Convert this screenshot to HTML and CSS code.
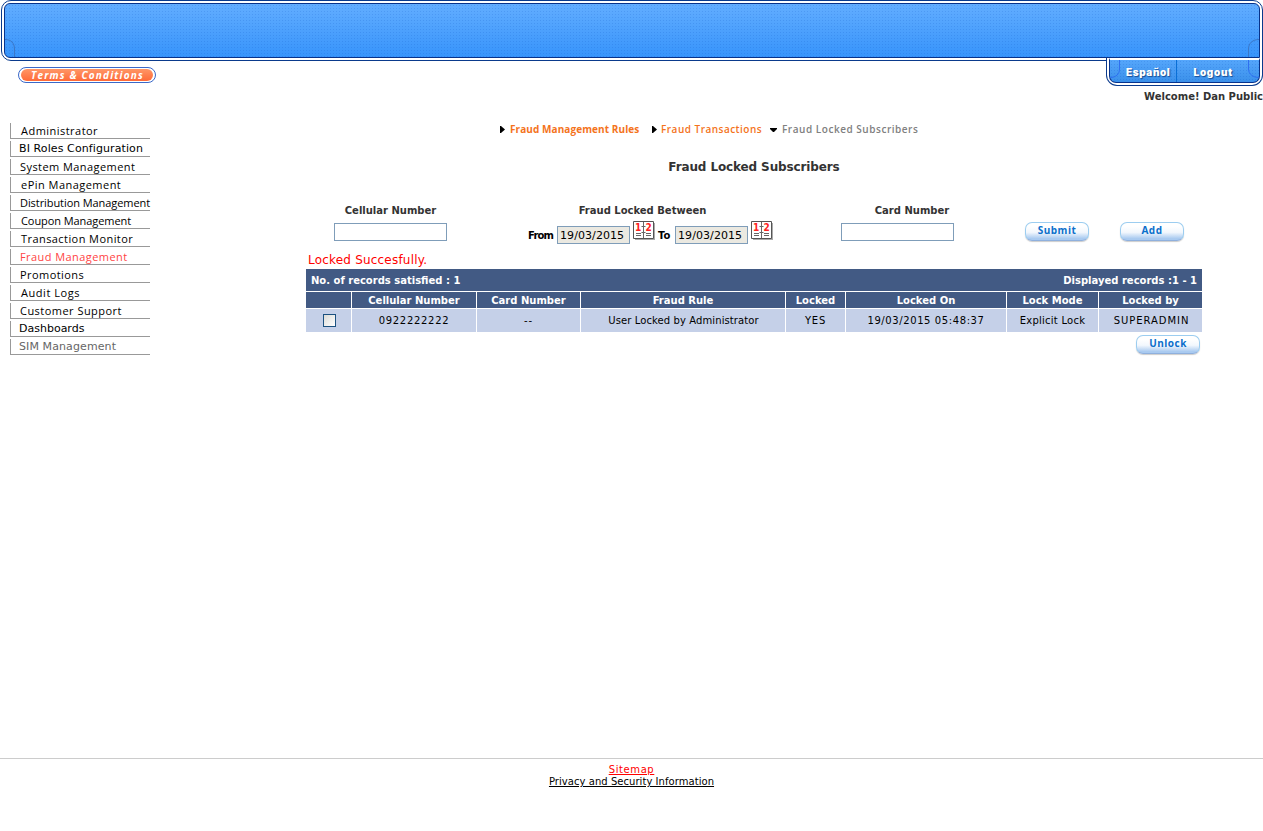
FILE: index.html
```html
<!DOCTYPE html>
<html lang="en">
<head>
<meta charset="utf-8">
<title>Fraud Locked Subscribers</title>
<link rel="stylesheet" href="styles.css">
</head>
<body>
<header class="banner">
  <div class="banner-fill">
    <svg class="corner" width="11" height="18" viewBox="0 0 11 18"><path d="M0 .5C6 .5 9.500 4 9.500 10V18" fill="none" stroke="#3b78c8"/></svg>
    <svg class="corner" width="11" height="18" viewBox="0 0 11 18"><path d="M11 .5C5 .5 .5 4 .5 10V18" fill="none" stroke="#3b78c8"/></svg>
  </div>
</header>
<div class="subbar">
  <a class="terms"><span>Terms &amp; Conditions</span></a>
  <div class="account">
    <nav class="tab">
      <div class="tab-fill">
        <svg width="11" height="23" viewBox="0 0 11 23"><path d="M9.500 0V9C9.500 14 6 17.500 0 17.500" fill="none" stroke="#2f6ff0"/></svg>
        <a class="tab-link es">Español</a>
        <a class="tab-link out">Logout</a>
        <svg width="11" height="23" viewBox="0 0 11 23"><path d="M.5 0V9C.5 14 5 17.500 11 17.500" fill="none" stroke="#2f6ff0"/></svg>
      </div>
    </nav>
    <div class="welcome">Welcome! Dan Public</div>
  </div>
</div>
<div class="page">
  <nav class="menu">
    <a class="ls45">Administrator</a>
    <a class="wide ls-bi">BI Roles Configuration</a>
    <a class="ls4 near">System Management</a>
    <a class="ls45">ePin Management</a>
    <a class="ls-tight near">Distribution Management</a>
    <a class="ls-tight">Coupon Management</a>
    <a class="ls4">Transaction Monitor</a>
    <a class="ls4 near current">Fraud Management</a>
    <a class="ls4 near">Promotions</a>
    <a class="ls5">Audit Logs</a>
    <a class="ls45 near">Customer Support</a>
    <a class="wide dash">Dashboards</a>
    <a class="wide sim">SIM Management</a>
  </nav>
  <main class="main">
    <nav class="crumbs">
      <svg width="5" height="7" viewBox="0 0 5 7"><path d="M0 0H1L5 3.500L1 7H0Z"/></svg><a class="crumb rules">Fraud Management Rules</a>
      <svg width="5" height="7" viewBox="0 0 5 7"><path d="M0 0H1L5 3.500L1 7H0Z"/></svg><a class="crumb trans">Fraud Transactions</a>
      <svg width="7" height="4" viewBox="0 0 7 4"><path d="M0 0H7V1L4 4H3L0 1Z"/></svg><span class="crumb active">Fraud Locked Subscribers</span>
    </nav>
    <h1 class="title">Fraud Locked Subscribers</h1>
    <form class="filters">
      <div class="field cell"><label>Cellular Number</label><input type="text"></div>
      <div class="field between"><label>Fraud Locked Between</label>
        <div class="dates">
          <b class="from">From</b><span class="date">19/03/2015</span>
          <svg class="cal" width="23" height="20" viewBox="0 0 23 20"><path d="M2 18H21V2" fill="none" stroke="#aaa" stroke-width="2"/><path d="M.5.5H20.500V17.500H.5Z" fill="#fff" stroke="#555"/><path d="M10.500 1V17M8.500 5.500H12.500M8.500 11.500H12.500" stroke="#666" fill="none"/><path d="M3 12.500H8M3 14.500H8M13 12.500H18M13 14.500H18" stroke="#666"/><text x="2" y="10">1</text><text x="12.500" y="10">2</text></svg>
          <b class="to">To</b><span class="date">19/03/2015</span>
          <svg class="cal" width="23" height="20" viewBox="0 0 23 20"><path d="M2 18H21V2" fill="none" stroke="#aaa" stroke-width="2"/><path d="M.5.5H20.500V17.500H.5Z" fill="#fff" stroke="#555"/><path d="M10.500 1V17M8.500 5.500H12.500M8.500 11.500H12.500" stroke="#666" fill="none"/><path d="M3 12.500H8M3 14.500H8M13 12.500H18M13 14.500H18" stroke="#666"/><text x="2" y="10">1</text><text x="12.500" y="10">2</text></svg>
        </div>
      </div>
      <div class="field card"><label>Card Number</label><input type="text"></div>
      <div class="actions"><button type="button" class="btn">Submit</button><button type="button" class="btn add">Add</button></div>
    </form>
    <div class="message">Locked Succesfully.</div>
    <div class="records"><span>No. of records satisfied : 1</span><span>Displayed records :1 - 1</span></div>
    <div class="grid head">
      <div></div><div>Cellular Number</div><div>Card Number</div><div>Fraud Rule</div><div>Locked</div><div>Locked On</div><div>Lock Mode</div><div>Locked by</div>
    </div>
    <div class="grid row">
      <div><span class="check"></span></div><div class="num">0922222222</div><div class="dashes">--</div><div class="rule">User Locked by Administrator</div><div class="yes">YES</div><div class="when">19/03/2015 05:48:37</div><div class="mode">Explicit Lock</div><div class="admin">SUPERADMIN</div>
    </div>
    <div class="unlock"><button type="button" class="btn">Unlock</button></div>
  </main>
</div>
<footer class="footer">
  <a class="sitemap">Sitemap</a>
  <a class="privacy">Privacy and Security Information</a>
</footer>
</body>
</html>
```
FILE: styles.css
```css
* { box-sizing: border-box; }
body {
  margin: 0; height: 831px; overflow: hidden; background: #fff; color: #000;
  font: 10px/12px "DejaVu Sans", Verdana, sans-serif;
  display: flex; flex-direction: column;
}
svg { display: block; flex: none; }

.banner {
  height: 61px; margin-left: 1px; padding: 2px;
  border: 1px solid #0a3a8c; border-radius: 10px 10px 0 10px; flex: none;
}
.banner-fill {
  height: 55px; border: 1px solid #07328a; border-radius: 6px 6px 0 6px;
  background:
    radial-gradient(circle, rgba(0, 70, 190, .16) .7px, transparent .8px) 0 0 / 3px 3px,
    linear-gradient(#62adff, #3794fb);
  display: flex; justify-content: space-between; align-items: flex-end;
}

.subbar { display: flex; justify-content: space-between; height: 62px; flex: none; }
.terms {
  width: 138px; height: 16px; margin: 6px 0 0 18px; padding: 1px;
  border: 1px solid #3a68c8; border-radius: 8px;
}
.terms span {
  display: block; height: 12px; padding-left: 10px; margin: 0 1px; border-radius: 6px;
  background: linear-gradient(#ff9666, #ff6a38); color: #fff;
  font: italic 700 10px/12px "Open Sans", sans-serif; letter-spacing: 1.17px; white-space: nowrap;
}
.account { width: 157px; margin-top: -3px; position: relative; }
.tab {
  height: 28px; padding: 0 2px 2px; background: #fff;
  border: solid #0a3a8c; border-width: 0 1px 1px; border-radius: 0 0 11px 11px;
}
.tab-fill {
  height: 25px; border: solid #07328a; border-width: 0 1px 1px; border-top: 2px solid #fff;
  border-radius: 0 0 7px 7px; display: flex; overflow: hidden;
  background:
    radial-gradient(circle, rgba(0, 70, 190, .16) .7px, transparent .8px) 0 0 / 3px 3px,
    linear-gradient(#55a6fb, #3a90ea);
}
.tab-link {
  color: #fff; font: 900 10px/24px Inter, sans-serif; white-space: nowrap;
  text-shadow: 1px 1px 1px #174d94;
}
.es { width: 56px; padding-left: 5px; letter-spacing: .6px; border-right: 1px solid #0a6fd6; }
.out { width: 72px; padding-left: 17px; letter-spacing: .7px; }
.welcome {
  margin-top: 5px; font-weight: 700; text-align: right; color: #333;
  letter-spacing: 0; white-space: nowrap;
}

.page { display: flex; align-items: flex-start; height: 635px; flex: none; }
.menu { width: 140px; margin-left: 10px; display: grid; grid-template-columns: 140px; gap: 2px; }
.menu a {
  height: 16px; padding-left: 10px; border: solid #999; border-width: 0 0 1px 1px;
  font: 11px/16px "Open Sans", sans-serif; white-space: nowrap;
}
.menu .near { padding-left: 9px; }
.menu .wide { font-family: "DejaVu Sans", sans-serif; padding-left: 8px; line-height: 15px; }
.menu .current { color: #f44; }
.ls-tight { letter-spacing: -.07px; }
.ls4 { letter-spacing: .43px; }
.ls45 { letter-spacing: .47px; }
.ls5 { letter-spacing: .55px; }
.ls-bi { letter-spacing: .1px; }
.dash { letter-spacing: 0; }
.menu .sim { letter-spacing: .1px; color: #666; }

.main { width: 896px; margin-left: 156px; }
.crumbs { display: flex; align-items: center; height: 13px; padding-left: 194px; }
.crumb { font: 600 10px/13px "Open Sans", sans-serif; color: #f4731c; white-space: nowrap; }
.rules { font-weight: 700; width: 147px; padding-left: 5px; letter-spacing: .08px; }
.trans { width: 113px; padding-left: 4px; letter-spacing: .48px; }
.active { padding-left: 5px; color: #808080; letter-spacing: .53px; }
.title {
  margin: 23px 0 0; font-size: 12px; line-height: 16px; color: #333;
  text-align: center; letter-spacing: -.12px;
}

.filters { display: flex; height: 67px; margin: 30px 0 0; }
.field { display: flex; flex-direction: column; align-items: center; }
.field label { font-weight: 700; color: #333; height: 18px; }
.cell { width: 169px; }
.between { width: 335px; }
.card { width: 204px; }
.field input { width: 113px; height: 18px; padding: 0; border: 1px solid #7f9db9; background: #fff; }
.card input { align-self: flex-start; margin-left: 31px; }
.dates { display: flex; align-items: flex-start; margin: -2px 0 0 17px; }
.from { margin: 9px 2px 0 0; width: 27px; letter-spacing: -.8px; }
.to { margin: 9px 0 0 2px; width: 17px; }
.date {
  width: 73px; height: 18px; margin: 5px 3px 0 0; padding-left: 2px; border: 1px solid #7f9db9;
  background: #ebe9e1; font-size: 11px; line-height: 17px; letter-spacing: .08px;
}
.cal text { font: 700 10px "DejaVu Sans Condensed", "DejaVu Sans", sans-serif; fill: #f22; }
.actions { display: flex; gap: 31px; padding: 17px 0 0 11px; }
.btn {
  width: 64px; height: 19px; padding: 0 0 2px; border: 1px solid #9ccdf0; border-bottom-color: #8fb0dd;
  border-radius: 7px; background: linear-gradient(#fff 20%, #f2f7fd 55%, #a9caf0 92%);
  box-shadow: 0 1px 1px #ccc; color: #0b6fcb;
  font: 700 10px/15px "Open Sans", sans-serif; letter-spacing: .5px;
}

.message { margin-top: -20px; height: 17px; padding-left: 2px; font-size: 12px; line-height: 17px; color: #f00; letter-spacing: .2px; }
.records {
  display: flex; justify-content: space-between; height: 22px; padding: 0 5px; line-height: 23px;
  background: #425a84; color: #fff; font-weight: 700; letter-spacing: 0;
}
.grid {
  display: grid; grid-template-columns: 45px 124px 103px 204px 59px 160px 91px 103px;
  column-gap: 1px; margin-top: 1px; text-align: center; white-space: nowrap;
}
.head > div { height: 16px; background: #425a84; color: #fff; font-weight: 700; line-height: 17px; }
.row > div { height: 23px; background: #c5d0e8; line-height: 23px; }
.check {
  display: block; width: 13px; height: 13px; margin: 5px 0 0 17px; border: 1px solid #1c5180;
  background: linear-gradient(135deg, #dcdcd7, #fff);
}
.num { letter-spacing: .7px; }
.dashes { letter-spacing: 1px; }
.rule { letter-spacing: .1px; padding-left: 1px; }
.yes { letter-spacing: .8px; }
.when { letter-spacing: .6px; }
.mode { letter-spacing: .25px; }
.admin { letter-spacing: .95px; padding-left: 2px; }
.unlock { display: flex; justify-content: flex-end; padding: 3px 2px 0 0; }

.footer {
  display: flex; flex-direction: column; align-items: center; flex: none;
  border-top: 1px solid #ccc; padding-top: 5px;
}
.footer a { text-decoration: underline; }
.sitemap { color: #f00; letter-spacing: .6px; }
.privacy { letter-spacing: .05px; }
```
